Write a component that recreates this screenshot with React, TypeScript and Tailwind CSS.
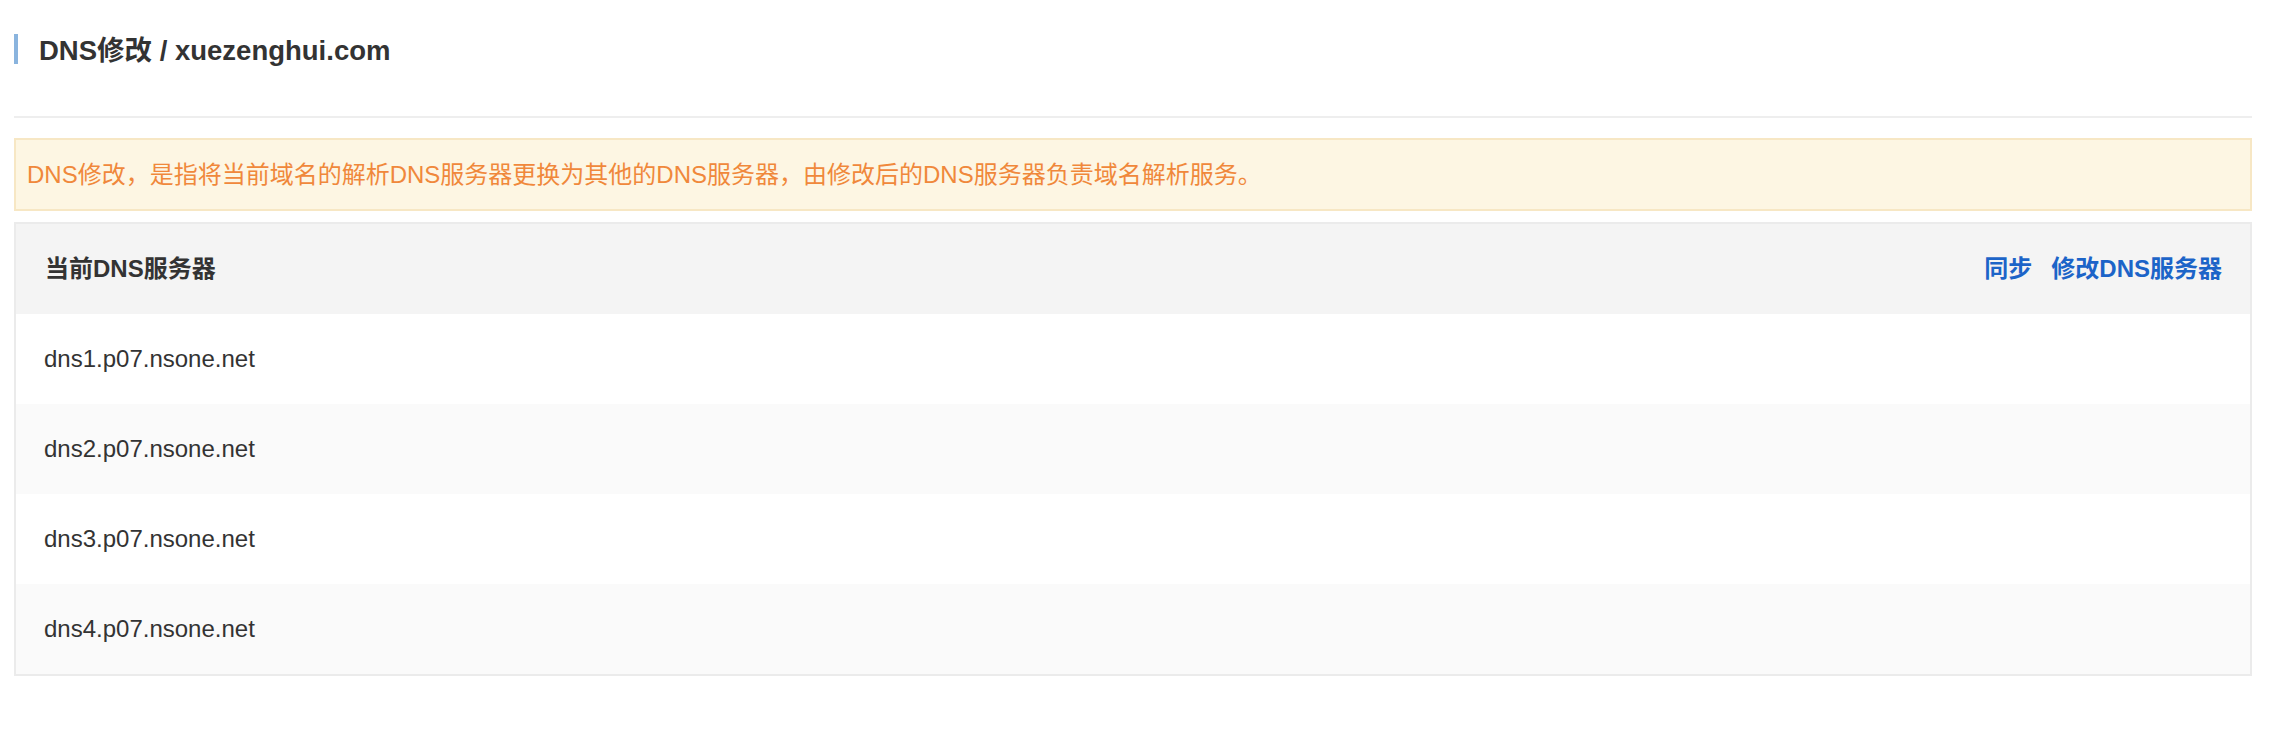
const servers = [
  "dns1.p07.nsone.net",
  "dns2.p07.nsone.net",
  "dns3.p07.nsone.net",
  "dns4.p07.nsone.net",
];

export default function App() {
  return (
    <div className="min-h-screen bg-white pl-[14px] pr-[18px] pt-[34px] font-['Liberation_Sans','Noto_Sans_CJK_SC',sans-serif]">
      {/* page title */}
      <div className="flex h-[30px] items-center">
        <div className="h-[30px] w-[4px] bg-[#8ab4de]" />
        <h1 className="ml-[21px] mt-[3px] text-[27.5px] font-bold leading-none text-[#333333]">
          DNS修改 / xuezenghui.com
        </h1>
      </div>

      <div className="mt-[52px] h-[2px] bg-[#eeeeee]" />

      {/* notice */}
      <div className="mt-[20px] flex h-[73px] items-center border-2 border-[#f7e7c4] bg-[#fdf6e3] px-[11px] text-[24px] text-[#f0883b]">
        DNS修改，是指将当前域名的解析DNS服务器更换为其他的DNS服务器，由修改后的DNS服务器负责域名解析服务。
      </div>

      {/* current servers */}
      <div className="mt-[11px] border-2 border-[#ebebeb]">
        <div className="flex h-[90px] items-center justify-between bg-[#f4f4f4] pl-[29px] pr-[28px]">
          <span className="text-[24px] font-bold text-[#333333]">当前DNS服务器</span>
          <div className="flex items-center gap-[19px] text-[24px] font-bold text-[#1c64c8]">
            <a href="#">同步</a>
            <a href="#">修改DNS服务器</a>
          </div>
        </div>
        {servers.map((s, i) => (
          <div
            key={s}
            className={
              "flex h-[90px] items-center pl-[28px] text-[24px] text-[#333333] " +
              (i % 2 === 1 ? "bg-[#fafafa]" : "bg-white")
            }
          >
            {s}
          </div>
        ))}
      </div>
    </div>
  );
}
